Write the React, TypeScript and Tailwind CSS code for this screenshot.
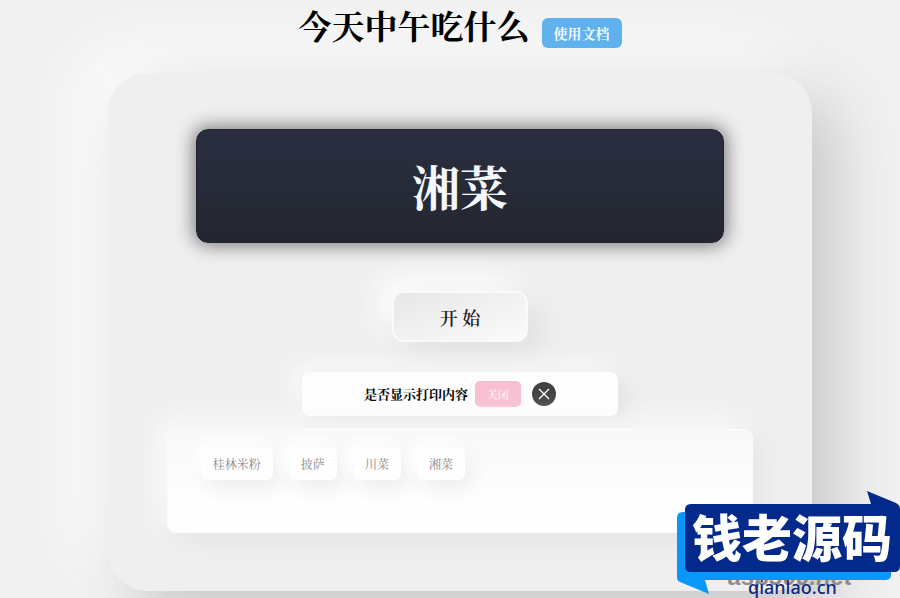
const dishes = ["桂林米粉", "披萨", "川菜", "湘菜"];

function Header() {
  return (
    <header className="flex items-start justify-center gap-3 h-[73px]">
      <h1 className="text-[33px] leading-[50px] font-bold text-black whitespace-nowrap">
        今天中午吃什么
      </h1>
      <a
        href="#docs"
        className="mt-[18px] flex h-[30px] items-center rounded-md bg-[#5fb2ee] px-3 text-sm font-bold text-[#f4faff] whitespace-nowrap"
      >
        使用文档
      </a>
    </header>
  );
}

function PrintToggle() {
  return (
    <div className="mt-[30px] flex h-11 w-[45%] items-center justify-center rounded-lg bg-[#fefdfe] shadow-[8px_8px_20px_#e2e1e2,-8px_-8px_20px_#fbfafb]">
      <span id="print-label" className="text-[13px] font-bold text-black whitespace-nowrap">
        是否显示打印内容
      </span>
      <button
        type="button"
        aria-labelledby="print-label"
        className="ml-[7px] h-[26px] w-[46px] shrink-0 rounded-[5px] bg-[#f7bfd0] text-[11px] font-bold text-[#fdeaf0]"
      >
        关闭
      </button>
      <button
        type="button"
        aria-label="清除"
        className="ml-[11px] flex size-6 shrink-0 items-center justify-center rounded-full bg-[#444344]"
      >
        <svg viewBox="0 0 24 24" className="size-6" fill="none" stroke="#fff" strokeWidth="1.3">
          <path d="M7 7l10 10M17 7L7 17" />
        </svg>
      </button>
    </div>
  );
}

function DishList() {
  return (
    <ul className="mt-[14px] flex h-[102px] w-[83%] items-start gap-4 rounded-lg bg-linear-to-b from-[#f7f8f8] to-[#fefefe] to-75% px-[33px] pt-[18px] shadow-[0_0_0_1px_#fcfbfc,10px_10px_24px_#e5e4e5,-10px_-10px_24px_#fbfafb]">
      {dishes.map((dish) => (
        <li
          key={dish}
          className="flex h-8 items-center rounded-md bg-[#fefefe] px-3 text-xs text-[#8a898a] whitespace-nowrap shadow-[6px_8px_18px_#eeeef1,-6px_-6px_14px_#ffffff]"
        >
          {dish}
        </li>
      ))}
    </ul>
  );
}

// Sello del sitio, fijo en la esquina inferior derecha
function SiteBadge() {
  return (
    <div className="absolute right-0 bottom-0 h-[107px] w-[223px] overflow-hidden">
      <span className="absolute top-[74px] left-[51px] font-['Liberation_Sans'] text-2xl leading-6 font-bold italic text-[#8c8c8e]">
        asp300.net
      </span>
      <svg viewBox="0 0 223 107" className="absolute inset-0 h-full w-full" aria-hidden>
        <path
          d="M6 21H208Q214 21 214 27V84Q214 89 208 89H28L32 103L3 91Q0 90 0 86V27Q0 21 6 21Z"
          fill="#0a97fb"
        />
        <path
          d="M14 13H194L190 0L219 12Q223 14 223 18V75Q223 81 217 81H14Q8 81 8 75V19Q8 13 14 13Z"
          fill="#03298a"
        />
      </svg>
      <span className="absolute top-[12px] left-[15px] font-['Noto_Sans_CJK_SC',sans-serif] text-[50px] leading-[64px] font-black text-white whitespace-nowrap">
        钱老源码
      </span>
      <span className="absolute top-[86px] left-[71px] font-['Noto_Sans'] text-lg leading-5 font-medium text-[#10297f] whitespace-nowrap">
        qianlao.cn
      </span>
    </div>
  );
}

export default function App() {
  return (
    <main className="relative min-h-screen overflow-hidden bg-[#f0f0f0] pb-[7px] pl-5 font-['Noto_Serif_CJK_SC','Noto_Sans_CJK_SC',serif]">
      <Header />
      <section className="mx-auto flex w-4/5 flex-col items-center rounded-[40px] bg-[#f0eff0] pt-14 pb-[59px] shadow-[24px_24px_60px_#c9c8c9,-30px_-24px_60px_6px_#fdfbfc]">
        <div className="flex h-[114px] w-3/4 items-center justify-center rounded-xl border border-[#20242c] bg-linear-to-b from-[#2a2d40] via-[#262b38] to-[#23262f] text-5xl font-bold text-[#f3f7ff] shadow-[0_0_18px_3px_#7f7e80]">
          湘菜
        </div>
        <button
          type="button"
          className="mt-12 h-[51px] w-[136px] rounded-xl border-2 border-[#fbfafb] bg-linear-to-br from-[#e8e7e8] to-[#fcfbfc] text-lg font-semibold text-[#222] shadow-[14px_14px_28px_#e2e1e2,-14px_-14px_28px_#fdfcfd]"
        >
          开 始
        </button>
        <PrintToggle />
        <DishList />
      </section>
      <SiteBadge />
    </main>
  );
}
